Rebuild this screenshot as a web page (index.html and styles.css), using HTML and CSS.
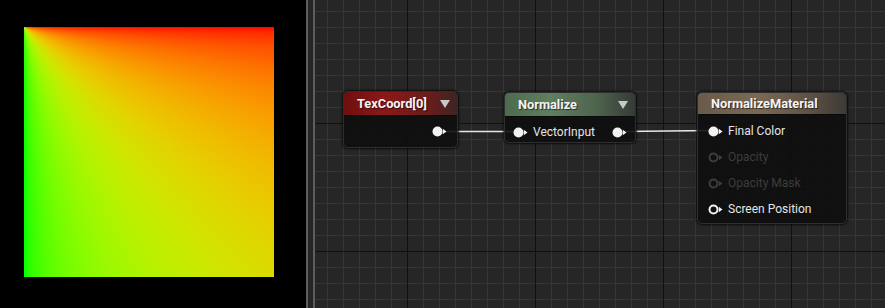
FILE: index.html
```html
<!DOCTYPE html>
<html>
<head>
<meta charset="utf-8">
<link rel="stylesheet" href="styles.css">
</head>
<body>
<div class="app">
  <div class="preview"><div class="swatch"></div></div>
  <div class="divider"><span class="rail"></span><span class="gap"></span><span class="rail"></span></div>
  <div class="graph">
    <svg class="wires" width="570" height="308" viewBox="0 0 570 308">
      <path d="M128 131.5 C163 131.5 163 131.5 198 131.5"/>
      <path d="M308 131.5 C352 131.5 352 130.5 397 130.5"/>
    </svg>

    <div class="node node-texcoord">
      <div class="node-head head-red"><span class="title">TexCoord[0]</span><span class="caret"></span></div>
      <div class="node-body">
        <div class="row row-out">
          <svg class="pin" viewBox="0 0 15 11" width="15" height="11"><circle cx="5.5" cy="5.5" r="5"/><path d="M10.8 2.8 L14.5 5.5 L10.8 8.2Z"/></svg>
        </div>
      </div>
    </div>

    <div class="node node-normalize">
      <div class="node-head head-green"><span class="title">Normalize</span><span class="caret"></span></div>
      <div class="node-body">
        <div class="row row-io">
          <span class="row-in">
            <svg class="pin" viewBox="0 0 15 11" width="15" height="11"><circle cx="5.5" cy="5.5" r="5"/><path d="M10.8 2.8 L14.5 5.5 L10.8 8.2Z"/></svg>
            <span class="label">VectorInput</span>
          </span>
          <svg class="pin" viewBox="0 0 15 11" width="15" height="11"><circle cx="5.5" cy="5.5" r="5"/><path d="M10.8 2.8 L14.5 5.5 L10.8 8.2Z"/></svg>
        </div>
      </div>
    </div>

    <div class="node node-material">
      <div class="node-head head-brown"><span class="title">NormalizeMaterial</span></div>
      <div class="node-body body-material">
        <div class="row row-in">
          <svg class="pin" viewBox="0 0 15 11" width="15" height="11"><circle cx="5.5" cy="5.5" r="5"/><path d="M10.8 2.8 L14.5 5.5 L10.8 8.2Z"/></svg>
          <span class="label">Final Color</span>
        </div>
        <div class="row row-in dim">
          <svg class="pin hollow" viewBox="0 0 15 11" width="15" height="11"><circle cx="5.5" cy="5.5" r="4"/><path d="M10.8 2.8 L14.5 5.5 L10.8 8.2Z"/></svg>
          <span class="label">Opacity</span>
        </div>
        <div class="row row-in dim">
          <svg class="pin hollow" viewBox="0 0 15 11" width="15" height="11"><circle cx="5.5" cy="5.5" r="4"/><path d="M10.8 2.8 L14.5 5.5 L10.8 8.2Z"/></svg>
          <span class="label">Opacity Mask</span>
        </div>
        <div class="row row-in">
          <svg class="pin hollow" viewBox="0 0 15 11" width="15" height="11"><circle cx="5.5" cy="5.5" r="4"/><path d="M10.8 2.8 L14.5 5.5 L10.8 8.2Z"/></svg>
          <span class="label">Screen Position</span>
        </div>
      </div>
    </div>
  </div>
</div>
</body>
</html>
```

FILE: styles.css
```css
* { box-sizing: border-box; }
html, body { margin: 0; padding: 0; }
body {
  background: #000;
  font-family: Roboto, "Liberation Sans", sans-serif;
  width: 885px;
  height: 308px;
  overflow: hidden;
}
.app {
  display: flex;
  width: 885px;
  height: 308px;
}
.preview {
  width: 306px;
  flex: none;
  background: #000;
  padding: 27px 0 0 24px;
}
.swatch {
  width: 250px;
  height: 250px;
  background: conic-gradient(from 90deg at 0 0,
    rgb(255,0,0) 0deg, rgb(255,23,0) 0.5deg, rgb(255,36,0) 1deg, rgb(255,52,0) 2deg,
    rgb(254,83,0) 5deg, rgb(253,116,0) 10deg, rgb(251,139,0) 15deg, rgb(248,158,0) 20deg,
    rgb(244,174,0) 25deg, rgb(239,188,0) 30deg, rgb(234,199,0) 35deg, rgb(227,210,0) 40deg,
    rgb(219,219,0) 45deg, rgb(210,227,0) 50deg, rgb(199,234,0) 55deg, rgb(188,239,0) 60deg,
    rgb(174,244,0) 65deg, rgb(158,248,0) 70deg, rgb(139,251,0) 75deg, rgb(116,253,0) 80deg,
    rgb(83,254,0) 85deg, rgb(52,255,0) 88deg, rgb(36,255,0) 89deg, rgb(23,255,0) 89.5deg,
    rgb(0,255,0) 90deg, rgb(0,255,0) 360deg);
}
.divider {
  width: 9px;
  flex: none;
  display: flex;
  background: #252525;
}
.divider .rail { width: 2px; background: #5e5e5e; }
.divider .gap { flex: 1; }

.graph {
  position: relative;
  flex: 1;
  background-color: #262626;
  background-image:
    linear-gradient(90deg, #101010 1px, transparent 1px),
    linear-gradient(180deg, #101010 1px, transparent 1px),
    linear-gradient(90deg, #363636 1px, transparent 1px),
    linear-gradient(180deg, #363636 1px, transparent 1px);
  background-size: 128px 100%, 100% 128px, 16px 100%, 100% 16px;
  background-position: 92px 0, 0 123px, 12px 0, 0 11px;
}
.wires {
  position: absolute;
  left: 0;
  top: 0;
}
.wires path {
  fill: none;
  stroke: #e8e8e8;
  stroke-width: 1.6;
}

.node {
  position: absolute;
  background: rgba(14,14,14,0.9);
  border: 1px solid #2e2e2e;
  border-radius: 5px;
  box-shadow: 0 0 2px 1px rgba(0,0,0,0.7);
  overflow: hidden;
  color: #fff;
}
.node-texcoord { left: 28px; top: 91px; width: 115px; height: 57px; }
.node-normalize { left: 189px; top: 92px; width: 132px; height: 51px; }
.node-material { left: 382px; top: 92px; width: 150px; height: 132px; }

.node-head {
  height: 24px;
  display: flex;
  align-items: center;
  justify-content: space-between;
  padding: 0 7px 0 13px;
  border-bottom: 1px solid #0a0a0a;
}
.node-material .node-head { height: 22px; }
.head-red { background: linear-gradient(90deg, #6e0f0f 0%, #8c1818 35%, #6a1c1c 75%, #3e2424 100%); }
.head-green { background: linear-gradient(90deg, #4d6b4d 0%, #5f7f5f 35%, #4e644e 70%, #353b35 100%); }
.head-brown { background: linear-gradient(90deg, #6a5a4a 0%, #7b6955 40%, #5e5246 75%, #3e3a36 100%); }

.title {
  font-size: 12.8px;
  font-weight: 700;
  color: #f4f4f4;
  text-shadow: 1px 1px 1px rgba(0,0,0,0.6);
}
.caret {
  width: 0;
  height: 0;
  border-left: 5.5px solid transparent;
  border-right: 5.5px solid transparent;
  border-top: 8px solid #c8c8c8;
  margin-top: 1px;
}

.node-body { padding-top: 2px; }
.body-material { padding-top: 3px; }
.row {
  height: 26px;
  display: flex;
  align-items: center;
}
.row-out { justify-content: flex-end; padding-right: 10px; }
.row-io { justify-content: space-between; padding: 0 8px 0 8px; }
.row-in { display: flex; align-items: center; gap: 5px; }
.node-material .row-in { padding-left: 10px; }

.pin { display: block; flex: none; }
.pin circle, .pin path { fill: #f2f2f2; }
.pin.hollow circle { fill: none; stroke: #f2f2f2; stroke-width: 2; }
.label {
  font-size: 12px;
  color: #e4e4e4;
}
.dim .label { color: #3d3d3d; }
.dim .pin circle { stroke: #3d3d3d; }
.dim .pin path { fill: #3d3d3d; }
```
